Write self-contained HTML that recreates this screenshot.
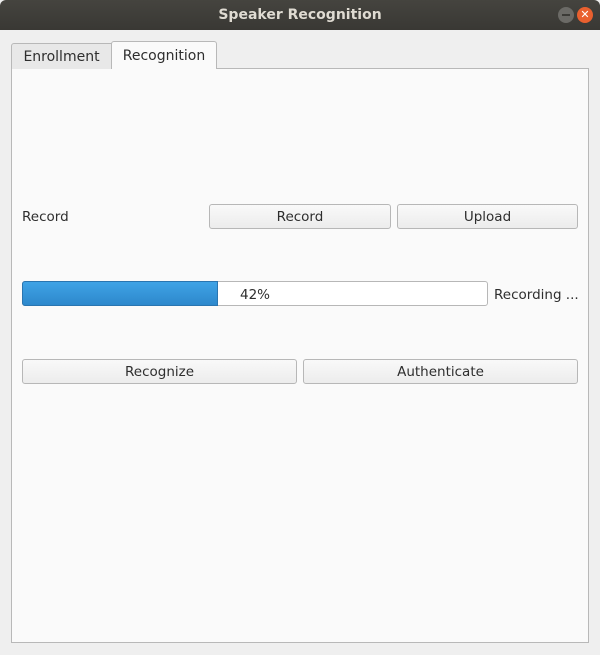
<!DOCTYPE html><html><head><style>
*{box-sizing:border-box;margin:0;padding:0}
body{width:600px;height:655px;background:#efefef;font-family:"DejaVu Sans","Liberation Sans",sans-serif;font-size:13.5px;color:#2e2e2e;position:relative;overflow:hidden}
.a{position:absolute}
.title{left:0;top:0;width:600px;height:30px;background:linear-gradient(#45443f,#393834);border-radius:6px 6px 0 0;color:#dfdbd2;font-weight:bold;font-size:14px;text-align:center;line-height:31px}
.btn{background:linear-gradient(#f9f9f9,#ececec);border:1px solid #b7b7b7;border-radius:3px;text-align:center;line-height:24px}
</style></head><body>
<div class="a title">Speaker Recognition</div>
<div class="a" style="left:558px;top:7px;width:16px;height:16px;border-radius:50%;background:#6b6a66;"><div class="a" style="left:4px;top:7px;width:8px;height:2px;background:#3c3b37"></div></div>
<div class="a" style="left:577px;top:7px;width:16px;height:16px;border-radius:50%;background:#e9602f;color:#fff;font-size:11px;line-height:16px;text-align:center">✕</div>
<div class="a" style="left:11px;top:68px;width:578px;height:575px;background:#fafafa;border:1px solid #b8b8b8"></div>
<div class="a" style="left:11px;top:43px;width:101px;height:26px;background:#e8e8e8;border:1px solid #b8b8b8;border-bottom:none;border-radius:3px 0 0 0;text-align:center;line-height:27px;font-size:14px">Enrollment</div>
<div class="a" style="left:111px;top:41px;width:106px;height:28px;background:#fafafa;border:1px solid #b8b8b8;border-bottom:none;border-radius:3px 3px 0 0;text-align:center;line-height:29px;font-size:14px">Recognition</div>
<div class="a" style="left:22px;top:208px;line-height:18px">Record</div>
<div class="a btn" style="left:209px;top:204px;width:182px;height:25px">Record</div>
<div class="a btn" style="left:397px;top:204px;width:181px;height:25px">Upload</div>
<div class="a" style="left:22px;top:281px;width:466px;height:25px;background:#fff;border:1px solid #b7b7b7;border-radius:3px"></div>
<div class="a" style="left:22px;top:281px;width:196px;height:25px;background:linear-gradient(#3fa3e6,#2d88cc);border:1px solid #2a75b0;border-radius:3px 0 0 3px"></div>
<div class="a" style="left:240px;top:286px;line-height:18px">42%</div>
<div class="a" style="left:494px;top:286px;line-height:18px">Recording ...</div>
<div class="a btn" style="left:22px;top:359px;width:275px;height:25px">Recognize</div>
<div class="a btn" style="left:303px;top:359px;width:275px;height:25px">Authenticate</div>
</body></html>
